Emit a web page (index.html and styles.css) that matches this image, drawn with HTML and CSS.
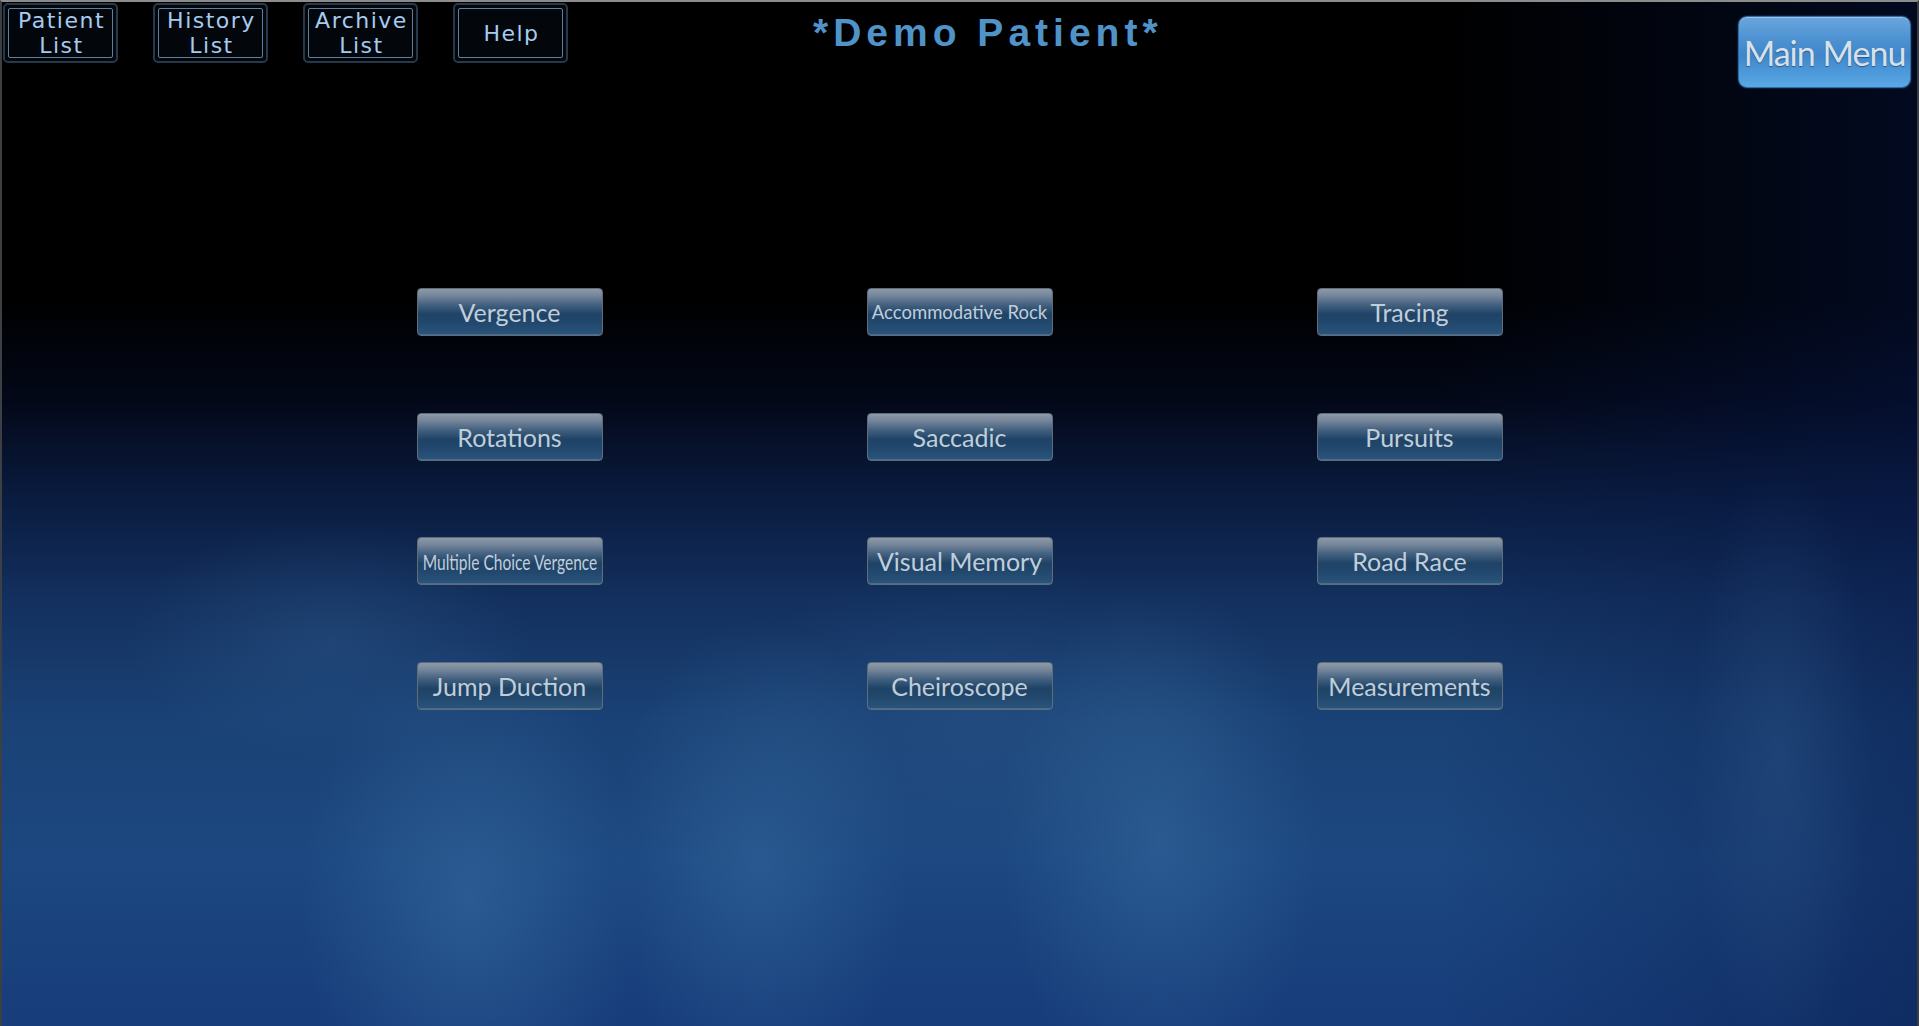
FILE: index.html
```html
<!DOCTYPE html>
<html lang="en">
<head>
    <meta charset="UTF-8">
    <meta name="viewport" content="width=device-width, initial-scale=1.0">
    <title>Demo Patient - Therapy Menu</title>
    <link rel="stylesheet" href="styles.css">
</head>
<body>
    <div class="top-bar">
        <div class="nav-group">
            <button class="nav-btn"><span class="nav-inner">Patient<br>List</span></button>
            <button class="nav-btn"><span class="nav-inner">History<br>List</span></button>
            <button class="nav-btn"><span class="nav-inner">Archive<br>List</span></button>
            <button class="nav-btn"><span class="nav-inner">Help</span></button>
        </div>

        <h1 class="patient-title">*Demo Patient*</h1>

        <button class="main-menu">Main Menu</button>
    </div>

    <div class="exercise-grid">
        <button class="exercise">Vergence</button>
        <button class="exercise small">Accommodative Rock</button>
        <button class="exercise">Tracing</button>

        <button class="exercise">Rotations</button>
        <button class="exercise">Saccadic</button>
        <button class="exercise">Pursuits</button>

        <button class="exercise"><span class="squeeze">Multiple Choice Vergence</span></button>
        <button class="exercise">Visual Memory</button>
        <button class="exercise">Road Race</button>

        <button class="exercise">Jump Duction</button>
        <button class="exercise">Cheiroscope</button>
        <button class="exercise">Measurements</button>
    </div>
</body>
</html>
```

FILE: styles.css
```css
* {
    box-sizing: border-box;
}

html, body {
    margin: 0;
    padding: 0;
}

body {
    width: 1919px;
    height: 1026px;
    overflow: hidden;
    font-family: Lato, "Open Sans", sans-serif;
    border-top: 2px solid #8c8c8c;
    border-left: 2px solid #3c3f44;
    border-right: 2px solid #3a3d44;
    background-color: #000;
    background-image:
        radial-gradient(ellipse 170px 260px at 470px 900px, rgba(70, 130, 180, 0.35), transparent),
        radial-gradient(ellipse 150px 240px at 760px 860px, rgba(70, 130, 180, 0.3), transparent),
        radial-gradient(ellipse 160px 260px at 1160px 840px, rgba(70, 130, 180, 0.32), transparent),
        radial-gradient(ellipse 200px 120px at 330px 640px, rgba(60, 110, 160, 0.25), transparent),
        radial-gradient(ellipse 260px 160px at 980px 720px, rgba(60, 110, 160, 0.22), transparent),
        radial-gradient(ellipse 90px 300px at 1780px 760px, rgba(70, 120, 170, 0.2), transparent),
        linear-gradient(to right, rgba(0, 0, 0, 0) 75%, rgba(6, 22, 70, 0.45) 100%),
        linear-gradient(to bottom, #000 0, #000 300px, #030818 400px, #0a1c40 500px, #13305e 600px, #1a4276 720px, #1c4780 860px, #173d7a 1026px);
}

button {
    font-family: inherit;
    cursor: pointer;
}

/* top bar */

.top-bar {
    display: flex;
    align-items: flex-start;
    padding: 1px 6px 0 1px;
}

.nav-group {
    display: flex;
    gap: 35px;
}

.nav-btn {
    width: 115px;
    height: 60px;
    padding: 3px;
    background-color: #03070c;
    border: 2px solid #26384a;
    border-radius: 5px;
}

.nav-inner {
    display: flex;
    align-items: center;
    justify-content: center;
    height: 100%;
    border: 1px solid #5f7f9f;
    border-radius: 2px;
    font-family: "DejaVu Sans", sans-serif;
    font-size: 22px;
    line-height: 25px;
    letter-spacing: 1.5px;
    padding-left: 2px;
    color: #a6cbef;
    text-align: center;
}

.patient-title {
    margin: 10px 0 0 245px;
    font-family: "Liberation Sans", Arial, sans-serif;
    font-size: 39px;
    line-height: 39px;
    font-weight: bold;
    letter-spacing: 5px;
    color: #4f93c8;
}

.main-menu {
    margin: 13px 0 0 auto;
    width: 173px;
    height: 72px;
    padding: 0;
    border: 1px solid #2f6aa6;
    border-radius: 9px;
    background: linear-gradient(to bottom, #6aa6dc 0%, #4e93d2 30%, #3f86cc 55%, #4d9ada 80%, #5aa8e4 100%);
    box-shadow: inset 0 1px 0 rgba(255, 255, 255, 0.35), 0 0 2px rgba(80, 140, 200, 0.6);
    font-size: 34px;
    letter-spacing: -1px;
    color: #d9e1e8;
    text-shadow: 0 1px 1px rgba(20, 50, 90, 0.6);
}

/* exercise buttons */

.exercise-grid {
    display: grid;
    grid-template-columns: repeat(3, 186px);
    grid-auto-rows: 48px;
    column-gap: 264px;
    row-gap: 76.5px;
    justify-content: center;
    margin-top: 200px;
}

.exercise {
    display: flex;
    align-items: center;
    justify-content: center;
    padding: 0;
    border: 1px solid #5f6c7a;
    border-radius: 4px;
    background: linear-gradient(to bottom, #8d99a6 0%, #74859a 15%, #42607f 35%, #1f4366 55%, #22486e 75%, #2b557c 100%);
    box-shadow: inset 0 -1px 0 rgba(160, 180, 200, 0.25);
    font-size: 25px;
    color: #c0ced9;
    white-space: nowrap;
    overflow: hidden;
}

.exercise.small {
    font-size: 18.5px;
}

.squeeze {
    flex-shrink: 0;
    font-size: 21px;
    transform: scaleX(0.74);
}
```
